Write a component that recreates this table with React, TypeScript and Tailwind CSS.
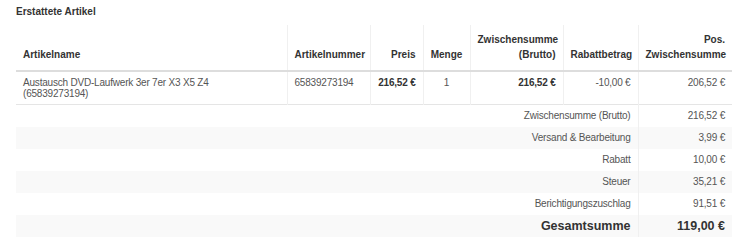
const HEAD = [
    { label: 'Artikelname', align: 'text-left', w: 'w-[271px]' },
    { label: 'Artikelnummer', align: 'text-left', w: 'w-[83px]' },
    { label: 'Preis', align: 'text-right', w: 'w-[53px]' },
    { label: 'Menge', align: 'text-center', w: 'w-[47px]' },
    { label: 'Zwischensumme (Brutto)', align: 'text-right', w: 'w-[93px]' },
    { label: 'Rabattbetrag', align: 'text-right', w: 'w-[75px]' },
    { label: 'Pos. Zwischensumme', align: 'text-right', w: 'w-[94px]' },
]

const TOTALS = [
    { label: 'Zwischensumme (Brutto)', value: '216,52 €' },
    { label: 'Versand & Bearbeitung', value: '3,99 €' },
    { label: 'Rabatt', value: '10,00 €' },
    { label: 'Steuer', value: '35,21 €' },
    { label: 'Berichtigungszuschlag', value: '91,51 €' },
]

const cell = 'align-top px-[7px] pt-[5px] leading-[11px] border-l border-l-[#f0f0f0]'

export default function App() {
    return (
        <div className="w-[749px] h-[250px] bg-white px-4 pt-[5px] font-['Liberation_Sans',Arial,sans-serif] text-[10px] text-[#555]">
            <h2 className="text-[10px] font-bold leading-[14px] text-[#333] mb-[6px]">Erstattete Artikel</h2>
            <table className="w-[716px] table-fixed border-collapse">
                <thead>
                    <tr>
                        {HEAD.map((h, i) => (
                            <th
                                key={i}
                                className={`${h.w} ${h.align} align-bottom font-bold text-[#333] leading-[15px] px-[7px] pt-[7px] pb-[8px] border-b-2 border-b-[#ddd] ${i > 0 ? 'border-l border-l-[#f0f0f0]' : ''}`}
                            >
                                {h.label}
                            </th>
                        ))}
                    </tr>
                </thead>
                <tbody className="tracking-[-0.2px]">
                    <tr className="border-b border-b-[#e5e5e5]">
                        <td className="align-top px-[7px] pt-[5px] pb-[5px] leading-[11px]">
                            Austausch DVD-Laufwerk 3er 7er X3 X5 Z4
                            <br />
                            (65839273194)
                        </td>
                        <td className={cell}>65839273194</td>
                        <td className={`${cell} text-right font-bold text-[#333]`}>216,52 €</td>
                        <td className={`${cell} text-center`}>1</td>
                        <td className={`${cell} text-right font-bold text-[#333]`}>216,52 €</td>
                        <td className={`${cell} text-right`}>-10,00 €</td>
                        <td className={`${cell} text-right`}>206,52 €</td>
                    </tr>
                    {TOTALS.map((t, i) => (
                        <tr key={i} className={`h-[22px] ${i % 2 === 1 ? 'bg-[#f9f9f9]' : ''}`}>
                            <td colSpan={6} className="text-right px-[7px] leading-[22px]">
                                {t.label}
                            </td>
                            <td className="text-right px-[7px] leading-[22px] border-l border-l-[#f0f0f0]">{t.value}</td>
                        </tr>
                    ))}
                    <tr className="h-[22px] bg-[#f9f9f9]">
                        <td colSpan={6} className="text-right px-[7px] leading-[22px] text-[12.5px] font-bold text-[#333] tracking-normal">
                            Gesamtsumme
                        </td>
                        <td className="text-right px-[7px] leading-[22px] text-[12.5px] font-bold text-[#333] tracking-normal border-l border-l-[#f0f0f0]">
                            119,00 €
                        </td>
                    </tr>
                </tbody>
            </table>
        </div>
    )
}
